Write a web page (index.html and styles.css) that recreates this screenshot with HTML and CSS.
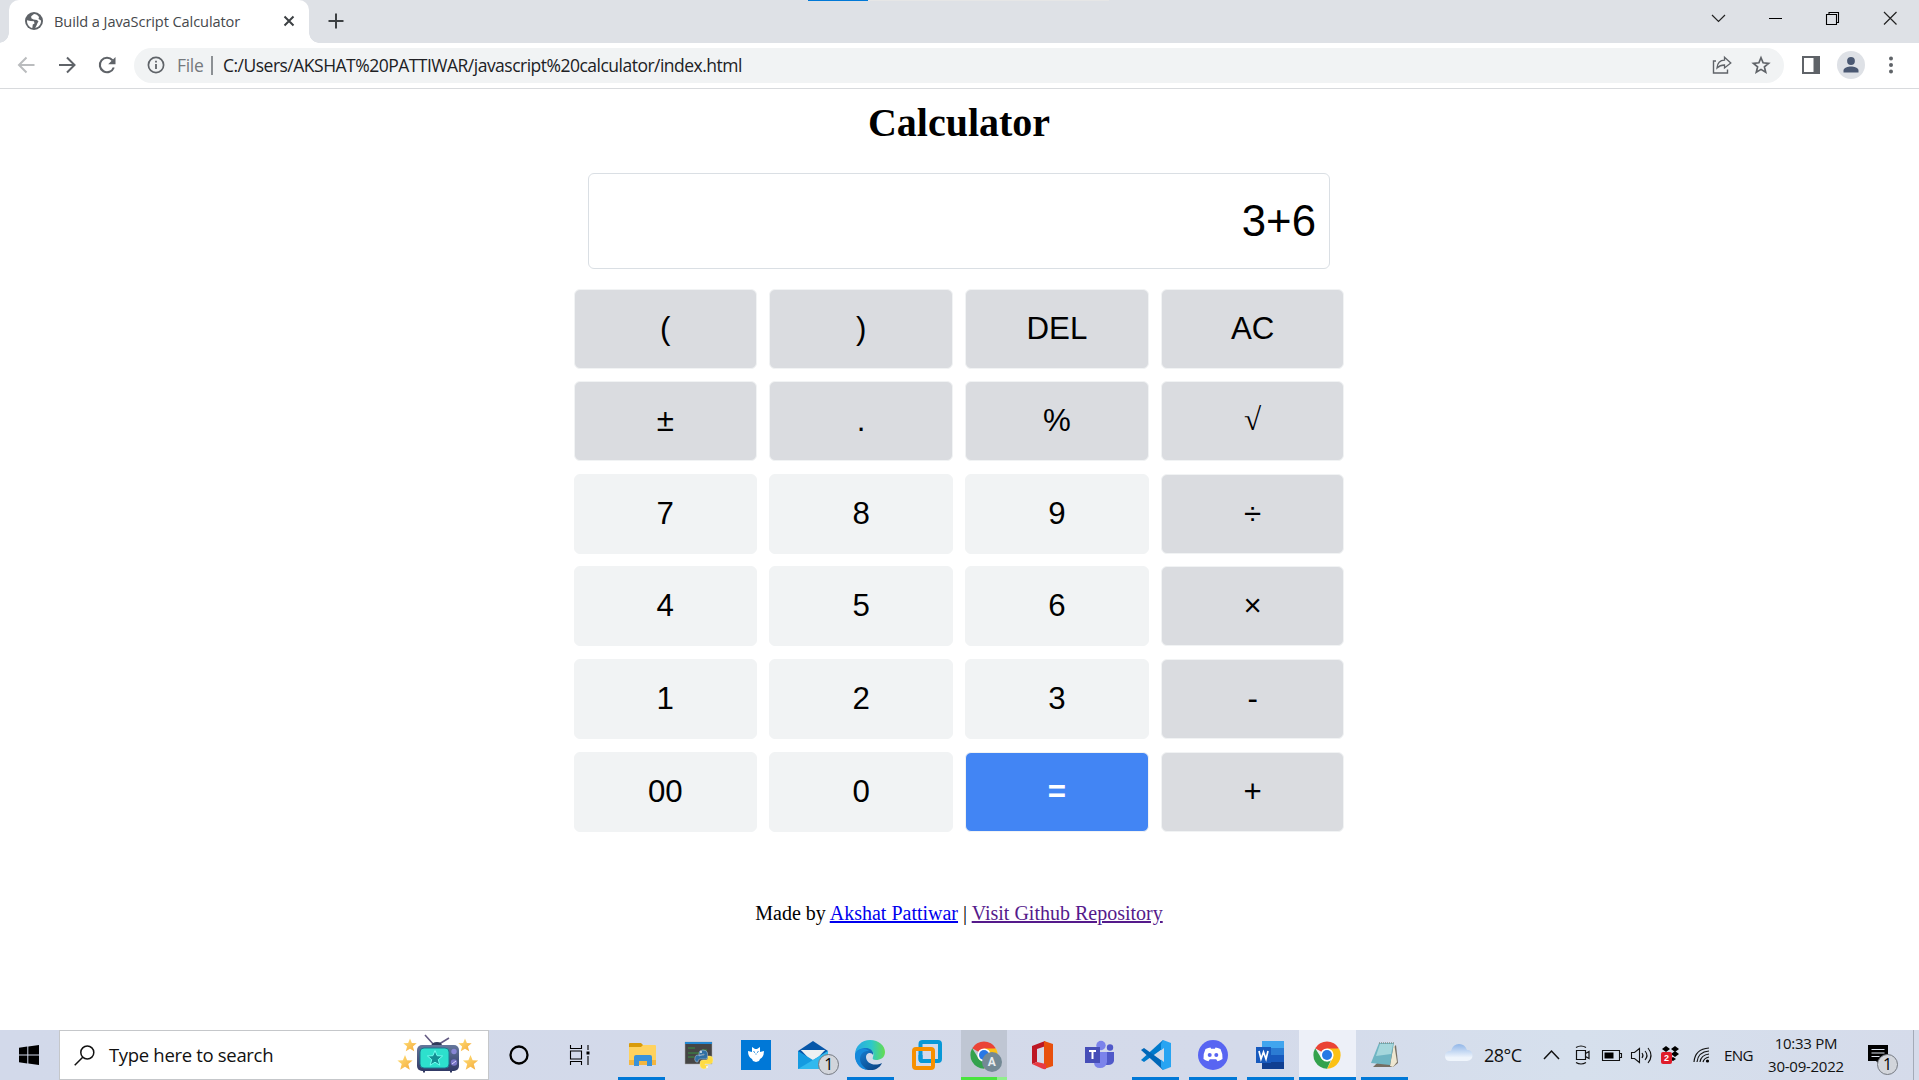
FILE: index.html
```html
<!DOCTYPE html>
<html lang="en">
<head>
<meta charset="utf-8">
<title>Build a JavaScript Calculator</title>
<link rel="stylesheet" href="styles.css">
</head>
<body>
<header class="tabstrip">
  <div class="progress"></div>
  <div class="tab">
    <svg class="globe" width="18" height="18" viewBox="0 0 18 18"><circle cx="9" cy="9" r="9" fill="#5f6368"/><path d="M2 8.200L5.500 9 9 9.300 9.500 11.500 7.800 12.500 7.300 16 C4 15.200 1.800 12 2 8.200ZM9 2 L6.200 4.200 6.300 6.200 8.500 7.500 12 8 13.500 9.500 12.500 11 11.500 13.500 10.200 15.900 C14 15.500 16.300 12 16 8.500 L13.500 7 14 5 C12.800 3.200 11 2 9 2Z" fill="#fff"/></svg>
    <span class="tab-title">Build a JavaScript Calculator</span>
    <svg class="tab-close" width="12" height="12" viewBox="0 0 12 12"><path d="M1.500 1.500l9 9m0-9l-9 9" stroke="#3c4043" stroke-width="2"/></svg>
  </div>
  <svg class="plus" width="16" height="16" viewBox="0 0 16 16"><path d="M8 .5v15M.5 8h15" stroke="#3c4043" stroke-width="2"/></svg>
  <div class="window-controls">
    <svg width="57" height="36" viewBox="0 0 57 36"><path d="M22 15l6.500 6.500L35 15" fill="none" stroke="#222" stroke-width="1.200"/></svg>
    <svg width="57" height="36" viewBox="0 0 57 36"><path d="M22 18.500h13" stroke="#000"/></svg>
    <svg width="57" height="36" viewBox="0 0 57 36"><path d="M22.500 14.500h10v10h-10zM25 14v-1.500h9.500v10H33" fill="none" stroke="#000" stroke-width="1.100"/></svg>
    <svg width="57" height="36" viewBox="0 0 57 36"><path d="M23 12l12.500 12.500M35.500 12L23 24.500" stroke="#222" stroke-width="1.200"/></svg>
  </div>
</header>
<nav class="toolbar">
  <svg width="41" height="44" viewBox="0 0 41 44"><path d="M28.500 22H13.500M20.500 14.500L13 22l7.500 7.500" fill="none" stroke="#babcbe" stroke-width="2"/></svg>
  <svg width="40" height="44" viewBox="0 0 40 44"><path d="M12 22h15M20 14.500l7.500 7.500-7.500 7.500" fill="none" stroke="#5f6368" stroke-width="2"/></svg>
  <svg width="40" height="44" viewBox="0 0 40 44"><path d="M25.500 17.300A7.200 7.200 0 1 0 26.800 24.500" fill="none" stroke="#5f6368" stroke-width="2.100"/><path d="M28.500 14v7.300h-7.300z" fill="#5f6368"/></svg>
  <div class="omnibox">
    <svg class="info" width="18" height="18" viewBox="0 0 18 18"><circle cx="9" cy="9" r="7.600" fill="none" stroke="#5f6368" stroke-width="1.700"/><path d="M9 8v5M9 4.800v1.800" stroke="#5f6368" stroke-width="1.800"/></svg>
    <span class="scheme">File</span><span class="divider"></span><span class="url">C:/Users/AKSHAT%20PATTIWAR/javascript%20calculator/index.html</span>
    <svg class="share" width="20" height="20" viewBox="0 0 20 20"><path d="M4 6H1.500v12h14v-3.500" fill="none" stroke="#5f6368" stroke-width="1.400"/><path d="M5 13c.4-5 3.200-7.700 7.500-7.800V2.300L18.800 8 12.500 13v-3C9.300 10 7.200 10.800 5 13z" fill="none" stroke="#5f6368" stroke-width="1.300"/></svg>
    <svg class="star" width="20" height="20" viewBox="0 0 20 20"><path d="M10 2.700l2.100 5.100 5.500.5-4.200 3.600 1.300 5.400-4.700-2.900-4.700 2.900 1.300-5.400-4.200-3.600 5.500-.5z" fill="none" stroke="#5f6368" stroke-width="1.700"/></svg>
  </div>
  <svg class="panel" width="18" height="18" viewBox="0 0 18 18"><path d="M1 1h16v16H1z" fill="none" stroke="#5f6368" stroke-width="2"/><path d="M11.500 1H17v16h-5.500z" fill="#5f6368"/></svg>
  <svg class="avatar" width="28" height="28" viewBox="0 0 28 28"><circle cx="14" cy="14" r="14" fill="#dee1e6"/><circle cx="14" cy="10" r="3.900" fill="#4a5872"/><path d="M6.500 21.500v-2c0-2.700 4.500-4 7.500-4s7.500 1.300 7.500 4v2z" fill="#4a5872"/></svg>
  <svg class="menu" width="6" height="18" viewBox="0 0 6 18"><circle cx="3" cy="2.600" r="2" fill="#5f6368"/><circle cx="3" cy="9" r="2" fill="#5f6368"/><circle cx="3" cy="15.400" r="2" fill="#5f6368"/></svg>
</nav>
<main class="page">
  <h1>Calculator</h1>
  <div class="display">3+6</div>
  <div class="keys">
    <button>(</button><button>)</button><button>DEL</button><button>AC</button>
    <button>±</button><button>.</button><button>%</button><button class="root">√</button>
    <button class="digit">7</button><button class="digit">8</button><button class="digit">9</button><button>÷</button>
    <button class="digit">4</button><button class="digit">5</button><button class="digit">6</button><button>×</button>
    <button class="digit">1</button><button class="digit">2</button><button class="digit">3</button><button>-</button>
    <button class="digit">00</button><button class="digit">0</button><button class="equals">=</button><button>+</button>
  </div>
  <p class="credits">Made by <a class="author" href="#">Akshat Pattiwar</a> | <a class="repo" href="#">Visit Github Repository</a></p>
</main>
<footer class="taskbar">
  <div class="start"><svg width="20" height="20" viewBox="0 0 20 20"><path d="M0 2.800L8.300 1.600V9.400H0zM9.300 1.400L20 0v9.400H9.300zM0 10.400h8.300v8L0 17.200zM9.300 10.400H20V20L9.300 18.500z"/></svg></div>
  <div class="search">
    <svg width="21" height="21" viewBox="0 0 21 21"><circle cx="13.300" cy="7.500" r="6.500" fill="none" stroke="#111" stroke-width="1.500"/><path d="M8.700 12.200L.7 20.300" stroke="#111" stroke-width="1.500"/></svg>
    <span class="search-text">Type here to search</span>
    <svg class="tv" width="82" height="40" viewBox="0 0 82 40">
      <defs><linearGradient id="gold" x2="1" y2="1"><stop stop-color="#ffe27a"/><stop offset="1" stop-color="#f5a93a"/></linearGradient><linearGradient id="case" x2="0" y2="1"><stop stop-color="#65779c"/><stop offset="1" stop-color="#313966"/></linearGradient><path id="pstar" d="M0-7.500L2.100-2.300 7.600-2 3.300 1.600 4.800 7.200 0 4.200-4.800 7.200-3.300 1.600-7.600-2-2.100-2.300z"/></defs>
      <path d="M28 1l9 10M52 4l-13 8" stroke="#645b83" stroke-width="1.600"/><path d="M34 12q1-4 6-4t5 4z" fill="#313b5b"/>
      <path d="M27 35v3.500M54 35v3.500" stroke="#333860" stroke-width="2"/>
      <rect x="20" y="11" width="42" height="26" rx="5" fill="url(#case)"/><rect x="23" y="14" width="29" height="20" rx="4" fill="#2de0cd" stroke="#1b7990"/><use href="#pstar" x="38" y="24" fill="#148f94" stroke="#70fff0"/><circle cx="57" cy="17.500" r="2.700" fill="#8886d5"/><circle cx="57" cy="28.500" r="3.200" fill="#7774c5"/><path d="M55 30l4-3" stroke="#d9d8ff"/>
      <g fill="url(#gold)"><use href="#pstar" transform="translate(13 11) scale(.88)"/><use href="#pstar" x="8" y="28.500"/><use href="#pstar" transform="translate(68 11) scale(.88)"/><use href="#pstar" x="73.500" y="28.500"/></g>
    </svg>
  </div>
  <div class="cell cortana"><svg width="20" height="20" viewBox="0 0 20 20"><circle cx="10" cy="10" r="8.500" fill="none" stroke="#000" stroke-width="2.300"/></svg></div>
  <div class="cell taskview"><svg width="21" height="20" viewBox="0 0 21 20"><path d="M1.500 0v3.500h11V0M1.500 20v-3.500h11V20M1.500 6h11v8h-11zM19 0v5M19 11v9" fill="none" stroke="#000" stroke-width="1.100"/><path d="M17.500 6.500h3v3h-3z"/></svg></div>
  <div class="apps">
    <div class="cell open"><svg width="30" height="30" viewBox="0 0 30 30"><path d="M2 4q0-1 1-1h11l2 2v3H2z" fill="#d99b09"/><path d="M2 7h12l2-2h12q1 0 1 1v19H2z" fill="#ffd25e"/><path d="M2 20h27v5H2z" fill="#f4b63f"/><path d="M7 26v-9q0-2 2-2h14q2 0 2 2v9h-5v-5h-8v5z" fill="#3a92da"/></svg></div>
    <div class="cell"><svg width="30" height="30" viewBox="0 0 30 30"><path d="M1 2h27v22H1z" fill="#454545" stroke="#aaa" stroke-width=".5"/><path d="M1 2h27v2H1z" fill="#2387d3"/><path d="M4 8h7M4 13h12M4 17h6M18 10h5" stroke="#399342" stroke-width="1"/><path d="M15 16v-3q0-3 4-3t4.500 3v4q0 2-2 2H16q-2 0-2 3h-2q-2-2-1-5 .5-2 3-2h6v-1z" fill="#306fa4" stroke="#dce7ee" stroke-width=".4"/><path d="M16 23q0-3 3-3h3q2 0 2-3v-1h2q3 0 3 4 0 4-3 4h-5v1h3q-1 4-4 4t-4-3z" fill="#ffdc43" stroke="#fff4ae" stroke-width=".4"/><circle cx="17" cy="12" r=".9" fill="#fff"/><circle cx="23" cy="27" r=".9" fill="#fff"/></svg></div>
    <div class="cell"><svg width="30" height="30" viewBox="0 0 30 30"><path d="M0 0h30v30H0z" fill="#0078d7"/><path d="M7 11l4 1 0-5 3 2h2l3-2v5l4-1q0 6-4 8l-1 2-3 1-3-1-1-2q-4-2-4-8z" fill="#fff"/><path d="M12.500 11.500l1.500 1M17.500 11.500l-1.500 1M14.500 14h1" stroke="#0078d7"/></svg></div>
    <div class="cell mail"><svg width="30" height="30" viewBox="0 0 30 30"><path d="M0 11L15 1l15 10v17H0z" fill="#0757a9"/><path d="M3 10h24L15 23z" fill="#edf0f2"/><path d="M0 11l15 9L30 11v18H0z" fill="#159be1"/><path d="M0 29l20-12L30 11v18z" fill="#32b9ee"/><path d="M3 10h24L15 19z" fill="#edf0f2"/></svg><span class="count">1</span></div>
    <div class="cell open"><svg width="30" height="30" viewBox="0 0 30 30"><defs><linearGradient id="edgeA"><stop stop-color="#27a7e5"/><stop offset=".55" stop-color="#2ec8c9"/><stop offset="1" stop-color="#66dd4e"/></linearGradient><linearGradient id="edgeB" x2="1" y2="1"><stop stop-color="#1685dd"/><stop offset="1" stop-color="#0b3f7d"/></linearGradient></defs><path d="M0 15C0 6 7 0 15 0c9 0 15 6 15 12 0 6-5 8-9 8-3 0-4-1-3-3 2-5-2-8-7-8-6 0-10 3-11 6z" fill="url(#edgeA)"/><path d="M0 15c1-5 6-7 11-7 4 0 8 3 7 7-1-3-7-3-7 2 0 6 8 10 16 6-2 5-8 8-14 7C5 29 0 22 0 15z" fill="url(#edgeB)"/><path d="M0 15c2-7 10-8 14-4-8-1-12 8-6 15l4 4C4 29 0 22 0 15z" fill="#1589dc"/></svg></div>
    <div class="cell"><svg width="30" height="30" viewBox="0 0 30 30"><rect x="8.500" y="2" width="19.500" height="19" rx="2" fill="none" stroke="#0798d7" stroke-width="4"/><rect x="2" y="9" width="19" height="19" rx="2" fill="none" stroke="#f79000" stroke-width="4"/><path d="M8.500 15v4q0 2 2 2h8" fill="none" stroke="#0798d7" stroke-width="4"/></svg></div>
    <div class="cell profile-chrome"><svg width="30" height="30" viewBox="0 0 30 30"><g id="chrome"><path d="M15 15L3.200 8.200A13.700 13.700 0 0 1 26.800 8.200z" fill="#ea4335"/><path d="M15 8.500h12A13.700 13.700 0 0 1 15 28.700L20.600 18.200z" fill="#fbc116"/><path d="M3.200 8.200L9.400 18.200 15 21.500 19 20 15 28.700A13.700 13.700 0 0 1 3.200 8.200z" fill="#34a24d"/><circle cx="15" cy="15" r="6.600" fill="#fff"/><circle cx="15" cy="15" r="5" fill="#2878e5"/></g></svg><span class="initial">A</span></div>
    <div class="cell"><svg width="30" height="30" viewBox="0 0 30 30"><path d="M18 1L5 6v18l5-2V9l9-3z" fill="#bd1724"/><path d="M17 1l9 3v22l-9 3z" fill="#e8500d"/><path d="M5 24l5-2 9 2v5q-2 .5-4-.5z" fill="#e83a42"/></svg></div>
    <div class="cell"><svg width="30" height="30" viewBox="0 0 30 30"><circle cx="17" cy="5.500" r="4.700" fill="#7b83eb"/><circle cx="26" cy="7.500" r="3.200" fill="#5059c9"/><path d="M21 12h9v9q-1 4-6 4h-3z" fill="#5059c9"/><path d="M10 12h13v10q-1 6-7 6-6 0-6-6z" fill="#7b83eb"/><path d="M1 7h15v16H1z" fill="#464eb8"/><path d="M5 11h7M8.500 11v8" stroke="#fff" stroke-width="2"/></svg></div>
    <div class="cell open"><svg width="30" height="30" viewBox="0 0 30 30"><path d="M22 0L0 20l3 2L24 7z" fill="#007acc"/><path d="M3 8L0 10l22 20 2-7z" fill="#0067b8"/><path d="M22 0l8 3v24l-8 3-2-3V4z" fill="#27a4f2"/><path d="M23 8v14l-9-7z" fill="#d3dbe9"/></svg></div>
    <div class="cell open"><svg width="30" height="30" viewBox="0 0 30 30"><circle cx="15" cy="15" r="15" fill="#5865f2"/><path d="M7.500 9q3-1.500 5-1.500l.6 1.200h3.800l.6-1.200q2 0 5 1.500 2.500 5 2 10-3 2-5 2.200l-1.300-2h-6.400l-1.300 2Q8 21 5.500 19q-.5-5 2-10z" fill="#fff"/><circle cx="11.700" cy="15" r="2" fill="#5865f2"/><circle cx="18.300" cy="15" r="2" fill="#5865f2"/></svg></div>
    <div class="cell open"><svg width="30" height="30" viewBox="0 0 30 30"><path d="M7 1h22v7H7z" fill="#41a5ee"/><path d="M7 8h22v7H7z" fill="#2b7cd3"/><path d="M7 15h22v7H7z" fill="#185abd"/><path d="M7 22h22v7H7z" fill="#103f91"/><path d="M1 7h15v16H1z" fill="#185abd"/><path d="M4 11l2 8 2.500-7 2.500 7 2-8" fill="none" stroke="#fff" stroke-width="1.700"/></svg></div>
    <div class="cell open current"><svg width="30" height="30" viewBox="0 0 30 30"><use href="#chrome"/></svg></div>
    <div class="cell open"><svg width="30" height="30" viewBox="0 0 30 30"><path d="M27 5l2 18-5 4H4z" fill="#756e62"/><path d="M25 3l3 19-4 5-3-1z" fill="#eee7d1"/><path d="M10 3h15l-4 22-19-2z" fill="#6fb5c3"/><path d="M11 4h13l-2 10-15 2z" fill="#a5d7dc"/><path d="M10 3h16" stroke="#84948f" stroke-width="1.500" stroke-dasharray="1 1"/></svg></div>
  </div>
  <div class="weather"><svg width="28" height="18" viewBox="0 0 28 18"><defs><linearGradient id="cloud" x2="0" y2="1"><stop stop-color="#91b6e8"/><stop offset=".8" stop-color="#eff5fc"/></linearGradient></defs><path d="M5 17q-5 0-5-5t6-5Q8 0 14 0q6 0 8 6 5 0 5.500 5t-5.500 6z" fill="url(#cloud)"/></svg><span>28°C</span></div>
  <div class="tray">
    <svg width="31" height="30" viewBox="0 0 31 30"><path d="M8 19l7.500-8 7.500 8" fill="none" stroke="#111" stroke-width="1.500"/></svg>
    <svg width="30" height="30" viewBox="0 0 30 30"><path d="M9.500 10.500h9v9h-9zM18.500 13.500l3.500-2v7l-3.500-2M9 7.500q5-3 10 0M9 22.500q5 3 10 0" fill="none" stroke="#111" stroke-width="1.200"/></svg>
    <svg width="29" height="30" viewBox="0 0 29 30"><path d="M5.500 10.500h17v10h-17zM23 13.500h1.500v4H23" fill="none" stroke="#111" stroke-width="1.100"/><path d="M7.500 12.500h9v6h-9z"/></svg>
    <svg width="30" height="30" viewBox="0 0 30 30"><path d="M5.500 12.500h3l5-4v14l-5-4h-3zM16 13q2 2.500 0 5M19 11q4 4.500 0 9M22 8q6 7.500 0 15" fill="none" stroke="#111" stroke-width="1.100"/></svg>
    <div class="dropbox"><svg width="30" height="30" viewBox="0 0 30 30"><path d="M6 9l4-3 4 3-4 3zM15 9l4-3 4 3-4 3zM6 14l4-2 4 2-4 3zM15 14l4-3 4 3-4 3zM13 19l4-2 3 2-3 2z"/></svg><span>2</span></div>
    <svg width="32" height="30" viewBox="0 0 32 30"><path d="M8 22Q9 9 23 8M11 22q1-10 12-11M14 22q1-7 9-8M17 22q1-4 6-5" fill="none" stroke="#111" stroke-width="1.200"/><circle cx="21.500" cy="21" r="1.600"/></svg>
  </div>
  <div class="language">ENG</div>
  <div class="clock"><span>10:33 PM</span><span>30-09-2022</span></div>
  <div class="notices"><svg width="20" height="20" viewBox="0 0 20 20"><path d="M0 0h20v16H11v3l-3-3H0z"/><path d="M3.500 4.500h13M3.500 8h13M3.500 11.500h8" stroke="#dce4ee"/></svg><span class="count">1</span></div>
  <div class="show-desktop"></div>
</footer>
</body>
</html>
```
FILE: styles.css
```css
* { box-sizing: border-box; }
body { margin: 0; width: 1919px; height: 1080px; overflow: hidden; display: flex; flex-direction: column; background: #fff; font-family: "Open Sans", "Noto Sans", sans-serif; color: #202124; }
svg { display: block; flex: none; }
span { white-space: nowrap; }

.tabstrip { position: relative; height: 43px; flex: none; display: flex; align-items: flex-start; background: #dee1e6; }
.progress { position: absolute; top: 0; left: 808px; width: 301px; height: 1px; background: linear-gradient(90deg, #0078d7 60px, #e6e6e6 60px); }
.tab { position: relative; width: 300px; height: 43px; margin-left: 9px; padding: 0 14px 1px 16px; display: flex; align-items: center; background: #fff; border-radius: 10px 10px 0 0; }
.tab::before, .tab::after { content: ""; position: absolute; bottom: 0; width: 10px; height: 10px; }
.tab::before { left: -10px; background: radial-gradient(circle at 0 0, #dee1e6 9.5px, #fff 10px); }
.tab::after { right: -10px; background: radial-gradient(circle at 100% 0, #dee1e6 9.5px, #fff 10px); }
.tab-title { margin-left: 11px; font-size: 14.6px; letter-spacing: -.1px; color: #45484c; }
.tab-close { margin-left: auto; }
.plus { margin: 13px 0 0 19px; }
.window-controls { display: flex; margin: 0 1px 0 auto; }

.toolbar { height: 46px; flex: none; display: flex; align-items: center; padding: 0 0 1px 6px; border-bottom: 1px solid #d8dadd; }
.omnibox { width: 1650px; height: 35px; margin-left: 7px; padding: 0 13px 0 13px; display: flex; align-items: center; border-radius: 18px; background: #f1f3f4; font-size: 17.5px; letter-spacing: -.51px; }
.scheme { margin-left: 12px; width: 26px; color: #75797d; letter-spacing: -.3px; }
.divider { width: 2px; height: 19px; margin: 0 10px 0 8px; background: #8c9094; }
.share { margin-left: auto; }
.star { margin-left: 19px; }
.panel { margin-left: 18px; }
.avatar { margin-left: 17px; }
.menu { margin-left: 23px; }

.page { flex: 1; display: flex; flex-direction: column; align-items: center; width: 1918px; font-family: "Liberation Serif", serif; }
h1 { margin: 10px 0 0; font-size: 40px; line-height: 48px; color: #000; }
.display { width: 742px; height: 96px; margin-top: 26px; padding: 0 13px 0; border: 1px solid #dadfe4; border-radius: 6px; text-align: right; font: 43.75px/94px "Liberation Sans", sans-serif; color: #000; }
.keys { display: grid; grid-template-columns: repeat(4, 183.3px); grid-auto-rows: 80.05px; gap: 12.5px; margin-top: 19.8px; }
.keys button { padding: 0; border: 1px solid #f1f3f4; border-radius: 6px; background: #dadce0; font: 31.25px "Liberation Sans", sans-serif; color: #000; }
.keys .digit { background: #f1f3f4; }
.keys .equals { background: #4285f4; color: #fff; font-weight: bold; }
.keys .root { padding-bottom: 3px; font-family: "Liberation Serif", serif; }
.credits { margin: 70.4px 0 0; font-size: 20px; line-height: 23px; color: #000; }
.author { color: #00e; }
.repo { color: #551a8b; }

.taskbar { height: 50px; flex: none; display: flex; align-items: center; background: linear-gradient(90deg, #d2d9ea, #d4daea 65%, #d6e0ed 82%, #d5dbea); color: #111; }
.start { width: 59px; padding-right: 1px; display: flex; justify-content: center; }
.search { width: 430px; height: 50px; padding: 0 9px 0 14px; display: flex; align-items: center; background: #fff; border: 1px solid #c5c7ca; }
.search-text { margin: -2px 0 0 14px; font-size: 18.5px; letter-spacing: -.32px; }
.tv { margin: -2px 0 0 auto; }
.cell { position: relative; height: 50px; display: flex; align-items: center; justify-content: center; }
.cortana { width: 60px; }
.taskview { width: 60px; }
.apps { display: flex; margin-left: 4px; }
.apps .cell { width: 57.15px; }
.open::after { content: ""; position: absolute; left: 5px; right: 5px; bottom: 0; height: 3px; background: #0078d7; }
.current { background: #edf0f8; }
.current::after { left: 0; right: 0; }
.profile-chrome { background: linear-gradient(#bfc6d3, #bfc6d3) 5px 0 / 46px 50px no-repeat; }
.profile-chrome::after { content: ""; position: absolute; left: 5px; bottom: 0; width: 46px; height: 3px; background: linear-gradient(90deg, #49e43d 36px, #91ef8c 36px); }
.initial { position: absolute; left: 26px; top: 22px; width: 20px; height: 20px; border-radius: 50%; background: #738995; color: #e9edef; font: bold 12px/20px Roboto, sans-serif; text-align: center; }
.count { position: absolute; width: 21px; height: 21px; border: 1px solid #747981; border-radius: 50%; background: #d2d5db; color: #000; text-align: center; font-size: 16px; line-height: 18px; }
.mail .count { left: 34px; top: 24px; }
.weather { display: flex; align-items: center; margin-left: 32px; width: 91px; font-size: 18px; letter-spacing: -.5px; }
.weather span { margin-left: 11px; }
.weather svg { margin-top: -4px; }
.tray { display: flex; }
.dropbox { position: relative; }
.dropbox span { position: absolute; left: 5px; top: 12px; width: 11px; height: 12px; border-radius: 2px; background: #df1d2b; color: #fff; font: bold 9px/12px "Liberation Sans", sans-serif; text-align: center; }
.language { width: 34px; margin-left: 6px; font-size: 15.2px; letter-spacing: -.7px; }
.clock { width: 84px; margin-left: 6px; display: flex; flex-direction: column; align-items: center; font-size: 15px; line-height: 23px; letter-spacing: -.25px; }
.notices { position: relative; margin-left: 20px; width: 45px; height: 50px; padding-top: 15px; }
.notices .count { left: 9px; top: 24px; }
.show-desktop { width: 6px; height: 50px; margin-left: auto; border-left: 1px solid #a4abb8; }
```
